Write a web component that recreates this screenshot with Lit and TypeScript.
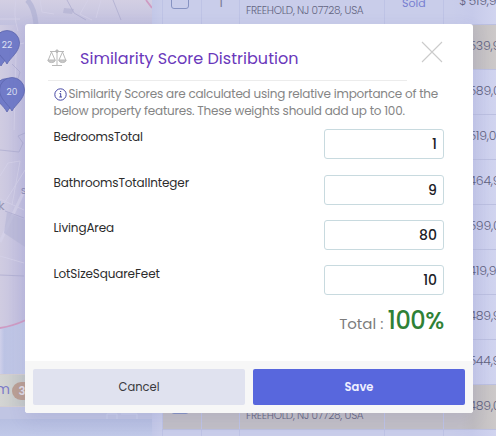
import { LitElement, html, svg, css } from "lit";
import { customElement } from "lit/decorators.js";
import { classMap } from "lit/directives/class-map.js";

interface Row { price: string; tan?: boolean; address?: boolean; first?: boolean; }

@customElement("map-backdrop")
class MapBackdrop extends LitElement {
  static styles = css`
    :host { display: block; width: 152px; height: 436px; overflow: hidden; }
    svg { display: block; font-family: Poppins, Inter, sans-serif; }
  `;
  pin(x: number, y: number, label: string) {
    return svg`<g transform="translate(${x} ${y})">
      <path d="M0 20 C-3 14 -12.500 8 -12.500 -1 A12.500 12.500 0 0 1 12.500 -1 C12.500 8 3 14 0 20Z" fill="#717bc8" stroke="#5d66ad" stroke-width=".8"/>
      <text x="0" y="4" text-anchor="middle" font-size="9" fill="#dfe1f4">${label}</text></g>`;
  }
  render() {
    return html`<svg width="152" height="436" viewBox="0 0 152 436">
      <defs>
        <linearGradient id="land"><stop offset="0" stop-color="#d0cce1"/><stop offset=".17" stop-color="#bfbddf"/><stop offset="1" stop-color="#c5c3df"/></linearGradient>
        <linearGradient id="top" x2="0" y2="1"><stop offset="0" stop-color="#d3cfe3"/><stop offset="1" stop-color="#c2c1df"/></linearGradient>
        <linearGradient id="water"><stop offset="0" stop-color="#cfd0ea"/><stop offset=".17" stop-color="#bcc3e4"/><stop offset="1" stop-color="#c3c9e7"/></linearGradient>
        <linearGradient id="tag"><stop offset="0" stop-color="#d4d5d3"/><stop offset=".17" stop-color="#c3c7c7"/></linearGradient>
        <linearGradient id="base" x2="0" y2="1"><stop offset="0" stop-color="#b7bfe1"/><stop offset="1" stop-color="#c0c8e8"/></linearGradient>
      </defs>
      <rect width="152" height="436" fill="url(#land)"/>
      <rect width="152" height="25" fill="url(#top)"/>
      <path d="M0 328Q15 325 25 320V436H0Z" fill="url(#water)"/>
      <g fill="none" stroke="#d5d2e9" stroke-width="1" opacity=".75">
        <path d="M16 0Q13 15 18 31M0 19H20M16 53L14 130M40 0L42 12L54 14M88 0L80 14L92 20M101 0L96 18M0 48L24 43M0 176L8 163L20 161M20 161L12 205M0 199L24 210M0 210L25 170M0 256L24 263"/>
        <path d="M0 242L24 191" stroke-width="3"/>
      </g>
      <g fill="none" stroke="#a9a8cd" stroke-width="1" opacity=".65">
        <path d="M0 150L19 152L23 143L18 136L25 133M5 211L24 218M0 275L24 276M12 64L20 72L18 79M67 0L74 13L86 20M113 0L121 20M0 104H7"/>
        <path d="M27 0Q34 6 36 24" stroke-width="5" stroke="#aeb0d3"/>
      </g>
      <path d="M7 212L25 220V247L4 233Z" fill="#b6b5d6" opacity=".65"/>
      <path d="M64 8L74 9L72 14L63 13Z" fill="#aaa9cd" opacity=".5"/>
      <path d="M0 328Q13 326 26 320M146 0L152 8" fill="none" stroke="#cf9bc3" stroke-width="1.800"/>
      <text x="-2" y="210" font-size="13" fill="#9897b6">k</text>
      <text x="21" y="194" font-size="9" fill="#8586b0">S</text>
      ${this.pin(1, 46, "")}${this.pin(7, 44, "22")}
      ${this.pin(7, 92, "")}${this.pin(12, 91, "20")}
      <rect y="374" width="152" height="33" fill="url(#tag)"/>
      <path d="M0 374.500H30M0 406.500H30" stroke="#d3cdcf"/>
      <text x="-4" y="394" font-size="13.500" fill="#7b79c8">m</text>
      <rect x="12" y="382" width="40" height="18" rx="9" fill="#ba9f94"/>
      <text x="18.500" y="395" font-size="11.500" font-weight="600" fill="#dfdbe7">3</text>
      <rect y="407" width="152" height="12" fill="#c0c5e3"/>
      <rect y="419" width="152" height="17" fill="url(#base)"/>
      <path d="M107 419V414H117V419M121 414H137V419" fill="none" stroke="#cbd0eb"/>
    </svg>`;
  }
}

@customElement("listing-table")
class ListingTable extends LitElement {
  static styles = css`
    :host { display: flex; width: 344px; height: 436px; overflow: hidden; box-sizing: border-box; padding-left: 10px;
      background: linear-gradient(90deg, #c3c8e8 0, #c9cdea 10px, #c9cdea 300px, #c6caea 320px, #d1d4ef 344px);
      font: 11px Poppins, Inter, sans-serif; color: #777993; }
    .table { width: 334px; flex: none; margin-top: -20px; }
    .row { display: grid; grid-template-columns: 39px 38px 145px 59px 53px; height: 45px; box-sizing: border-box;
      border-bottom: 1px solid #bbbfe0; }
    .tan { background: linear-gradient(90deg, #c2bfc6 0, #c2bfc6 299px, #bfbcc0 311px, #cdc9c9 334px); }
    .cell { border-left: 1px solid #bec3e5; box-sizing: border-box; white-space: nowrap; min-width: 0; }
    .check { width: 18px; height: 18px; margin: 11px 0 0 8px; box-sizing: border-box; border: 1px solid #8793c2; border-radius: 3px; }
    .num { padding: 14px 0 0 17px; font-size: 12px; }
    .addr { padding: 23px 0 0 6px; font-size: 10.500px; letter-spacing: -.28px; font-weight: 300; color: #62647f; }
    .sold { padding: 14.500px 0 0 17px; color: #777fd1; }
    .price { padding: 12px 0 0 15px; font-size: 12.500px; letter-spacing: -.25px; word-spacing: -1px; font-weight: 300; color: #5f617f; }
  `;
  rows: Row[] = [
    { price: "519,900", address: true, first: true }, { price: "539,900", tan: true }, { price: "589,000" },
    { price: "519,000" }, { price: "464,900" }, { price: "599,000" }, { price: "419,900" },
    { price: "489,900" }, { price: "544,900" }, { price: "489,000", tan: true, address: true }, { price: "" },
  ];
  render() {
    return html`<div class="table">${this.rows.map(r => html`
      <div class=${classMap({ row: true, tan: !!r.tan })}>
        <div class="cell">${r.address ? html`<div class="check"></div>` : ""}</div>
        <div class="cell num">${r.first ? "1" : ""}</div>
        <div class="cell addr">${r.address ? "FREEHOLD, NJ 07728, USA" : ""}</div>
        <div class="cell sold">${r.first ? "Sold" : ""}</div>
        <div class="cell price">${r.price ? "$ " + r.price : ""}</div>
      </div>`)}</div>`;
  }
}

@customElement("app-root")
class AppRoot extends LitElement {
  static styles = css`
    :host { display: block; width: 496px; height: 436px; overflow: hidden; position: relative; font-family: Poppins, Inter, sans-serif; }
    .page { display: flex; height: 436px; }
    .modal { position: absolute; left: 25px; top: 24px; width: 448px; height: 389px; border-radius: 3px; background: #fff;
      display: flex; flex-direction: column; overflow: hidden; box-shadow: 0 6px 18px rgba(80, 80, 160, .12); }
    .body { flex: 1; padding: 17px 29px 0 23px; }
    .head { display: flex; height: 39px; }
    .scales { display: block; width: 20px; height: 18px; margin: 8px 13px 0 -1px; }
    h1 { margin: 5px 0 0; font-size: 16px; line-height: 25px; font-weight: 400; letter-spacing: .03px; color: #6a38bb; white-space: nowrap; flex: 1; }
    .close { display: block; width: 22px; height: 22px; margin-right: 1px; }
    .rule { width: 359px; height: 1px; background: #ececec; }
    .note { margin: 4px 0 0 5.500px; font-size: 12px; line-height: 17px; color: #858585; white-space: nowrap; }
    .note div { display: flex; height: 17px; }
    .info { width: 13px; height: 14px; margin: 2px 2px 0 0; flex: none; }
    .one { letter-spacing: -.22px; }
    .two { letter-spacing: -.22px; }
    .fields { display: grid; grid-template-columns: 1fr 120px; grid-template-rows: 46px 45px 45px 45px; margin: 10px 0 0 5.500px; }
    .label { font-size: 12px; line-height: 17px; letter-spacing: -.12px; color: #2c2c2c; margin-top: -1px; }
    .label:nth-last-child(2) { margin-top: 0; }
    .input { box-sizing: border-box; width: 120px; height: 30px; border: 1px solid #c8dadf; border-radius: 3px; padding-right: 6px;
      text-align: right; font-size: 14px; font-weight: 500; line-height: 29px; color: #202026; }
    .total { display: flex; justify-content: flex-end; align-items: baseline; gap: 4px; height: 36px; line-height: 36px; margin-top: -7px;
      font-size: 15px; color: #7c7c7c; white-space: nowrap; }
    .total b { font-size: 24px; font-weight: 500; letter-spacing: -.4px; color: #2f8136; }
    .foot { height: 52px; box-sizing: border-box; padding: 8px; display: flex; gap: 8px; background: #f7f7f7; }
    .btn { width: 212px; height: 36px; border-radius: 2px; display: grid; place-items: center; background: #e0e2ef; color: #39393d;
      font-size: 11.500px; }
    .save { background: #5867dd; color: #eff0ff; font-weight: 600; }
  `;
  fields = [["BedroomsTotal", "1"], ["BathroomsTotalInteger", "9"], ["LivingArea", "80"], ["LotSizeSquareFeet", "10"]];
  render() {
    return html`
      <div class="page"><map-backdrop></map-backdrop><listing-table></listing-table></div>
      <div class="modal">
        <div class="body">
          <div class="head">
            <svg class="scales" viewBox="0 0 20 18" fill="none" stroke="#b9b9b9" stroke-width="1">
              <path d="M3 2.500H17M10 1V16M5 16.500H15"/><circle cx="10" cy="2.200" r="1.300" fill="#b9b9b9"/>
              <path d="M4.500 3L1.300 11M4.500 3L8 11M15.500 3L12 11M15.500 3L18.700 11"/>
              <path d="M.7 11H8.400Q7.800 13.600 4.600 13.600T.7 11ZM11.600 11H19.300Q18.700 13.600 15.500 13.600T11.600 11Z" fill="#c8c8c8"/>
            </svg>
            <h1>Similarity Score Distribution</h1>
            <svg class="close" viewBox="0 0 22 22" stroke="#cbcbcb" stroke-width="1.100"><path d="M1 1L21 21M21 1L1 21"/></svg>
          </div>
          <div class="rule"></div>
          <div class="note">
            <div><svg class="info" viewBox="0 0 13 14" fill="none" stroke="#4546a3"><circle cx="6.500" cy="7.500" r="5.700"/><path d="M5.500 6.500H6.700V10M5.300 10H8M6 4.500H7.200"/></svg><span class="one">Similarity Scores are calculated using relative importance of the</span></div>
            <div class="two">below property features. These weights should add up to 100.</div>
          </div>
          <div class="fields">${this.fields.map(([l, v]) => html`<div class="label">${l}</div><div class="input">${v}</div>`)}</div>
          <div class="total"><span>Total :</span><b>100%</b></div>
        </div>
        <div class="foot"><div class="btn">Cancel</div><div class="btn save">Save</div></div>
      </div>`;
  }
}
